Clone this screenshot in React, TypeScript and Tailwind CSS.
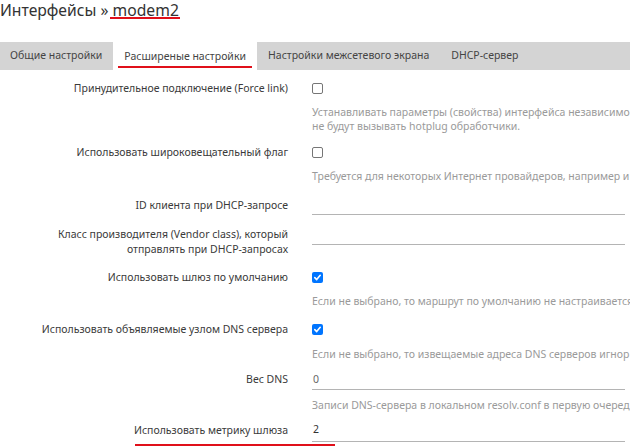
import React from "react";

const font = { fontFamily: '"Noto Sans", "Open Sans", sans-serif' };

function Box({ checked }: { checked?: boolean }) {
  if (checked) {
    return (
      <div className="w-[11px] h-[11px] rounded-[2px] bg-[#0075ff] flex items-center justify-center">
        <svg width="9" height="9" viewBox="0 0 10 10">
          <path d="M2 5.2 L4.1 7.3 L8 2.6" stroke="white" strokeWidth="1.8" fill="none" strokeLinecap="round" strokeLinejoin="round" />
        </svg>
      </div>
    );
  }
  return <div className="w-[11px] h-[11px] rounded-[2px] border border-[#767676] bg-white" />;
}

function Label({ children }: { children: React.ReactNode }) {
  return <div className="w-[288px] shrink-0 text-right text-[#3a3a3a] leading-[15px]">{children}</div>;
}

function Desc({ children, className }: { children: React.ReactNode; className?: string }) {
  return <div className={"ml-[312px] whitespace-nowrap text-[#9a9a9a] leading-[14px] " + (className || "")}>{children}</div>;
}

export default function App() {
  return (
    <div className="w-[630px] h-[448px] overflow-hidden bg-white text-[10.5px]" style={font}>
      <div className="h-[20px] text-[15.7px] leading-[20px] text-[#333] whitespace-nowrap">
        Интерфейсы »{" "}
        <span className="relative">
          modem2
          <span className="absolute left-[-3px] right-[-1px] top-[18px] h-[2px] bg-[#e0101a]" />
        </span>
      </div>
      <div className="mt-[22px] h-[28px] bg-[#d4d4d4] flex items-stretch text-[#444] whitespace-nowrap">
        <div className="flex items-center pl-[10px] pr-[11px]">Общие настройки</div>
        <div className="bg-white flex items-center px-[5px]">
          <span className="border-b-2 border-[#e0101a] pt-[5px] pb-[2px] px-[6px]">Расширеные настройки</span>
        </div>
        <div className="flex items-center px-[11px]">Настройки межсетевого экрана</div>
        <div className="flex items-center px-[11px]">DHCP-сервер</div>
      </div>

      {/* Row 1 */}
      <div className="mt-[8px] h-[20px] flex items-center">
        <Label>Принудительное подключение (Force link)</Label>
        <div className="ml-[24px]"><Box /></div>
      </div>
      <Desc className="mt-[7px]">
        Устанавливать параметры (свойства) интерфейса независимо
        <br />
        не будут вызывать hotplug обработчики.
      </Desc>

      {/* Row 2 */}
      <div className="mt-[9px] h-[20px] flex items-center">
        <Label>Использовать широковещательный флаг</Label>
        <div className="ml-[24px]"><Box /></div>
      </div>
      <Desc className="mt-[7px]">Требуется для некоторых Интернет провайдеров, например и</Desc>

      {/* Row 3 */}
      <div className="mt-[12px] h-[20px] flex items-center">
        <Label>ID клиента при DHCP-запросе</Label>
        <div className="ml-[24px] w-[313px] h-[20px] border-b border-[#b4b4b4]" />
      </div>

      {/* Row 4 */}
      <div className="mt-[12px] flex items-start">
        <Label>
          Класс производителя (Vendor class), который
          <br />
          отправлять при DHCP-запросах
        </Label>
        <div className="ml-[24px] w-[313px] h-[18px] border-b border-[#b4b4b4]" />
      </div>

      {/* Row 5 */}
      <div className="mt-[10px] h-[20px] flex items-center">
        <Label>Использовать шлюз по умолчанию</Label>
        <div className="ml-[24px]"><Box checked /></div>
      </div>
      <Desc className="mt-[7px]">Если не выбрано, то маршрут по умолчанию не настраивается</Desc>

      {/* Row 6 */}
      <div className="mt-[11px] h-[20px] flex items-center">
        <Label>Использовать объявляемые узлом DNS сервера</Label>
        <div className="ml-[24px]"><Box checked /></div>
      </div>
      <Desc className="mt-[8px]">Если не выбрано, то извещаемые адреса DNS серверов игнор</Desc>

      {/* Row 7 */}
      <div className="mt-[8px] h-[21px] flex items-center">
        <Label>Вес DNS</Label>
        <div className="ml-[24px] w-[313px] h-[21px] border-b border-[#b4b4b4] text-[#666] pl-[1px] leading-[20px]">0</div>
      </div>
      <Desc className="mt-[8px]">Записи DNS-сервера в локальном resolv.conf в первую очеред</Desc>

      {/* Row 8 */}
      <div className="mt-[7px] h-[23px] flex items-center">
        <Label>Использовать метрику шлюза</Label>
        <div className="ml-[24px] w-[313px] h-[23px] border-b border-[#b4b4b4] text-[#333] pl-[1px] leading-[21px]">2</div>
      </div>
      <div className="mt-[2px] ml-[135px] w-[200px] h-[2px] bg-[#e0101a]" />
    </div>
  );
}
